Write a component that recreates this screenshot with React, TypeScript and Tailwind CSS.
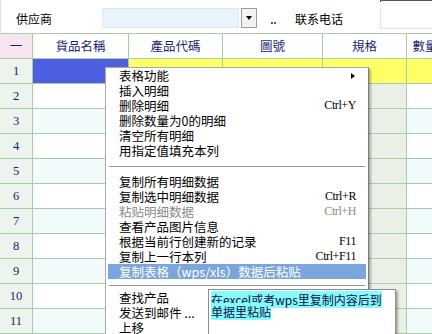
import React from "react";

const cjk = { fontFamily: '"Noto Sans CJK SC", "Noto Sans", sans-serif' };
const serif = { fontFamily: '"Liberation Serif", "DejaVu Serif", serif' };

const headers = ["一", "貨品名稱", "產品代碼", "圖號", "規格", "數量", ""];
const colW = ["w-[33px]", "w-[96px]", "w-[94px]", "w-[100px]", "w-[84px]", "w-[37px]", "w-[60px]"];

type Item = { t: string; k?: string; dis?: boolean; sub?: boolean; hi?: boolean };

const g1: Item[] = [
  { t: "表格功能", sub: true },
  { t: "插入明细" },
  { t: "删除明细", k: "Ctrl+Y" },
  { t: "删除数量为0的明细" },
  { t: "清空所有明细" },
  { t: "用指定值填充本列" },
];
const g2: Item[] = [
  { t: "复制所有明细数据" },
  { t: "复制选中明细数据", k: "Ctrl+R" },
  { t: "粘贴明细数据", k: "Ctrl+H", dis: true },
  { t: "查看产品图片信息" },
  { t: "根据当前行创建新的记录", k: "F11" },
  { t: "复制上一行本列", k: "Ctrl+F11" },
  { t: "复制表格（wps/xls）数据后粘贴", hi: true },
];
const g3: Item[] = [{ t: "查找产品" }, { t: "发送到邮件 ..." }, { t: "上移" }];

function MenuItem({ it }: { it: Item }) {
  return (
    <div
      className={
        "mx-[2px] h-[15px] flex items-center justify-between pl-[11px] pr-[10px] leading-[15px] " +
        (it.hi ? "bg-[#7ba6dc] text-white" : it.dis ? "text-[#8a8a8a]" : "text-black")
      }
    >
      <span className="text-[12.5px] whitespace-nowrap" style={cjk}>
        {it.t}
      </span>
      {it.k && (
        <span className="text-[12px] tracking-[-0.4px]" style={serif}>
          {it.k}
        </span>
      )}
      {it.sub && (
        <span className="w-0 h-0 border-l-[4px] border-l-black border-y-[3.5px] border-y-transparent mr-[1px]" />
      )}
    </div>
  );
}

function Sep({ top, bottom }: { top: string; bottom: string }) {
  return (
    <div className={top + " " + bottom + " mx-[3px]"}>
      <div className="h-px bg-[#9a9a9a]" />
      <div className="h-px bg-white" />
    </div>
  );
}

export default function App() {
  const rows = Array.from({ length: 11 }, (_, i) => i + 1);
  return (
    <div className="relative w-[432px] h-[334px] overflow-hidden bg-white" style={cjk}>
      {/* top bar */}
      <div className="flex items-start h-[33px] border-l border-l-[#d6e2ee]">
        <div className="w-[15px]" />
        <div className="w-[86px] mt-[11px] text-[12px] leading-[16px] text-black">供应商</div>
        <div className="mt-[8px] w-[137px] h-[20px] bg-[#e8f5fd] border border-[#dbe9f2]" />
        <div className="w-[2px]" />
        <div className="mt-[8px] w-[16px] h-[20px] border border-[#9c9c9c] bg-[#f2f2f2] flex items-center justify-center">
          <span className="w-0 h-0 border-t-[4px] border-t-black border-x-[3.5px] border-x-transparent" />
        </div>
        <div className="w-[14px]" />
        <div className="w-[24px] mt-[22px] flex gap-[1px]">
          <span className="w-[2px] h-[2px] bg-[#3a5cc4]" />
          <span className="w-[2px] h-[2px] bg-[#3a5cc4]" />
        </div>
        <div className="w-[85px] mt-[11px] text-[12px] leading-[16px] text-black">联系电话</div>
        <div className="flex-1 flex flex-col">
          <div className="h-[2px] border-t border-l border-[#555]" />
          <div className="mt-[6px] h-[21px] border-l border-b border-[#e2e2e2] bg-white" />
        </div>
      </div>

      {/* table */}
      <div className="border-t border-[#a6cea6] w-[504px]">
        <div className="flex h-[25px]">
          {headers.map((h, i) => (
            <div
              key={i}
              className={
                colW[i] +
                " shrink-0 border-r border-b border-[#a6cea6] flex items-center justify-center text-[12.5px] text-[#1b1b78] whitespace-nowrap overflow-visible " +
                (i === 0 ? "bg-[#f6e5ef]" : "bg-white")
              }
            >
              {h}
            </div>
          ))}
        </div>
        {rows.map((r) => {
          const alt = r % 2 === 1 ? "bg-[#f1fbfb]" : "bg-white";
          return (
            <div key={r} className="flex h-[25px]">
              {colW.map((w, i) => {
                let bg = alt;
                if (i === 0) bg = "bg-[#edf4ed]";
                else if (r === 1) bg = i === 1 ? "bg-[#4f5fe2]" : "bg-[#ffff66]";
                else if (i === 4) bg = "bg-[#eaf0e5]";
                return (
                  <div
                    key={i}
                    className={w + " shrink-0 border-r border-b border-[#a6cea6] flex items-center justify-center " + bg}
                  >
                    {i === 0 && (
                      <span className="text-[12.5px] text-[#1b1b6a]" style={serif}>
                        {r}
                      </span>
                    )}
                  </div>
                );
              })}
            </div>
          );
        })}
      </div>

      {/* context menu */}
      <div className="absolute left-[105px] top-[67px] w-[264px] h-[280px] bg-white border border-[#a8a8a8] border-r-[#7c7c7c] shadow-[2px_2px_2px_rgba(0,0,0,0.28)]">
        {g1.map((it) => (
          <MenuItem key={it.t} it={it} />
        ))}
        <Sep top="mt-[8px]" bottom="mb-[6px]" />
        {g2.map((it) => (
          <MenuItem key={it.t} it={it} />
        ))}
        <Sep top="mt-[6px]" bottom="mb-[3px]" />
        {g3.map((it) => (
          <MenuItem key={it.t} it={it} />
        ))}
      </div>

      {/* tooltip */}
      <div className="absolute left-[208px] top-[289px] w-[188px] h-[60px] bg-white border border-[#8c8c8c] shadow-[2px_2px_2px_rgba(0,0,0,0.3)] pl-[2px] pt-[4px]">
        <div className="text-[12px] leading-[12px] text-[#10104a]">
          <span className="bg-[#86fbfb]">在excel或者wps里复制内容后到</span>
        </div>
        <div className="text-[12px] leading-[12px] text-[#10104a]">
          <span className="bg-[#86fbfb]">单据里粘贴</span>
        </div>
      </div>
    </div>
  );
}
